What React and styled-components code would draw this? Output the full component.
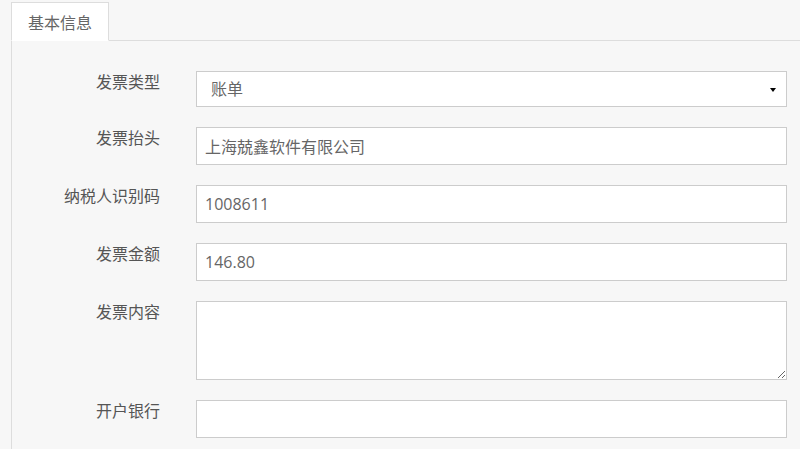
import styled, { createGlobalStyle } from "styled-components";

const GlobalStyle = createGlobalStyle`
  html, body {
    margin: 0;
    padding: 0;
    background: #f7f7f7;
    font-family: "Open Sans", "Noto Sans CJK SC", sans-serif;
  }
`;

const Page = styled.div`
  padding: 2px 0 0 11px;
  height: 447px;
  overflow: hidden;
`;

const TabBar = styled.div`
  display: flex;
  border-bottom: 1px solid #ddd;
`;

const Tab = styled.div`
  height: 37px;
  padding: 0 16px;
  margin-bottom: -1px;
  display: flex;
  align-items: center;
  background: #fff;
  border: 1px solid #ddd;
  border-bottom: 1px solid #fff;
  color: #666;
  font-size: 16px;
`;

const Panel = styled.div`
  border-left: 1px solid #ddd;
  padding: 30px 13px 20px 0;
  display: flex;
  flex-direction: column;
  gap: 20px;
`;

const Row = styled.div`
  display: flex;
  align-items: flex-start;
`;

const Label = styled.label`
  width: 148px;
  padding-right: 36px;
  text-align: right;
  line-height: 22px;
  font-size: 16px;
  color: #555;
  flex-shrink: 0;
`;

const Field = styled.input`
  flex: 1;
  box-sizing: border-box;
  height: 38px;
  padding: 0 8px;
  border: 1px solid #ccc;
  background: #fff;
  font-family: inherit;
  font-size: 16px;
  color: #666;
  outline: none;
`;

const Area = styled.textarea`
  flex: 1;
  box-sizing: border-box;
  height: 79px;
  padding: 6px 8px;
  border: 1px solid #ccc;
  background: #fff;
  font-family: inherit;
  font-size: 16px;
  color: #666;
  outline: none;
  resize: vertical;
`;

const SelectWrap = styled.div`
  flex: 1;
  position: relative;
  display: flex;
`;

const Select = styled.select`
  flex: 1;
  box-sizing: border-box;
  height: 36px;
  padding: 0 14px;
  border: 1px solid #ccc;
  border-radius: 0;
  background: #fff;
  appearance: none;
  font-family: inherit;
  font-size: 16px;
  color: #666;
  outline: none;
`;

const Caret = styled.span`
  position: absolute;
  right: 11px;
  top: 17px;
  width: 0;
  height: 0;
  border-left: 3px solid transparent;
  border-right: 3px solid transparent;
  border-top: 4px solid #000;
  pointer-events: none;
`;

const fields = [
  { label: "发票抬头", value: "上海兢鑫软件有限公司" },
  { label: "纳税人识别码", value: "1008611" },
  { label: "发票金额", value: "146.80" },
];

export default function App() {
  return (
    <Page>
      <GlobalStyle />
      <TabBar>
        <Tab>基本信息</Tab>
      </TabBar>
      <Panel>
        <Row>
          <Label>发票类型</Label>
          <SelectWrap>
            <Select defaultValue="bill">
              <option value="bill">账单</option>
            </Select>
            <Caret />
          </SelectWrap>
        </Row>
        {fields.map((f) => (
          <Row key={f.label}>
            <Label>{f.label}</Label>
            <Field defaultValue={f.value} />
          </Row>
        ))}
        <Row>
          <Label>发票内容</Label>
          <Area />
        </Row>
        <Row>
          <Label>开户银行</Label>
          <Field />
        </Row>
      </Panel>
    </Page>
  );
}
